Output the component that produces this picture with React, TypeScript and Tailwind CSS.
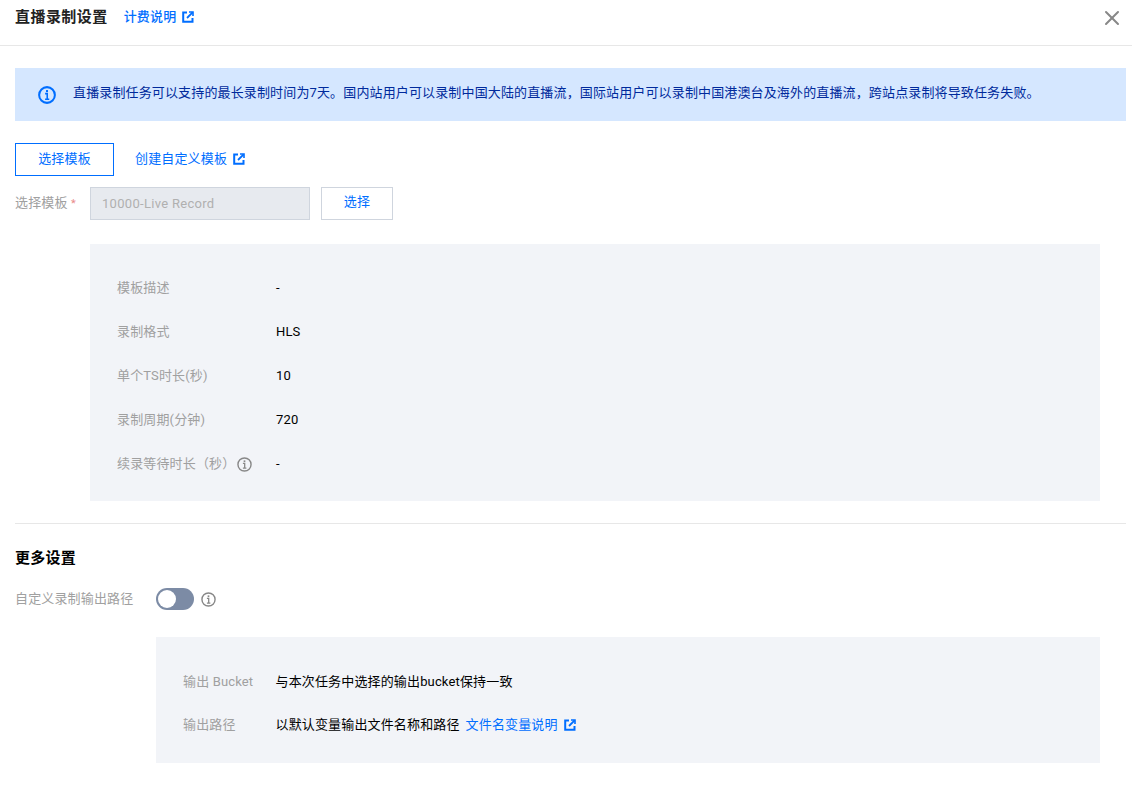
import { X } from "lucide-react";

const fontStack = "font-['Roboto','Noto_Sans_CJK_SC',sans-serif]";

const ExternalIcon = () => (
    <svg width="12" height="12" viewBox="0 0 12 12" className="shrink-0" fill="none">
        <path d="M5 1.5H1.2V10.8H10.5V7" stroke="#006eff" strokeWidth="2" />
        <path d="M7 1H11V5" stroke="#006eff" strokeWidth="1.6" />
        <path d="M10.6 1.4L5 7" stroke="#006eff" strokeWidth="1.8" />
    </svg>
);

const InfoIcon = ({ size = 15, color = "#888888", width = 1.5 }: { size?: number; color?: string; width?: number }) => (
    <svg width={size} height={size} viewBox="0 0 16 16" className="shrink-0" fill="none">
        <circle cx="8" cy="8" r="7" stroke={color} strokeWidth={width} />
        <rect x="7.1" y="3.6" width="1.8" height="1.8" fill={color} />
        <path d="M6.3 6.8H8.2V11.6M6.3 11.8H10" stroke={color} strokeWidth="1.4" />
    </svg>
);

const templateRows = [
    { label: "模板描述", value: "-" },
    { label: "录制格式", value: "HLS" },
    { label: "单个TS时长(秒)", value: "10" },
    { label: "录制周期(分钟)", value: "720" },
];

export default function App() {
    return (
        <div className={`w-[1132px] h-[795px] overflow-hidden bg-white text-[13px] tracking-[0.15px] text-black ${fontStack}`}>
            {/* Header */}
            <div className="h-[46px] pl-[15px] pr-2 pb-[12px] border-b border-[#e7e7e7] flex items-center">
                <span className="text-[15px] leading-5 font-bold tracking-[0.45px] text-[#222222]">直播录制设置</span>
                <span className="ml-[16px] text-[#006eff] font-medium">计费说明</span>
                <span className="ml-[6px]"><ExternalIcon /></span>
                <X className="ml-auto mt-[2px] text-[#888888]" size={24} strokeWidth={2} />
            </div>

            <div className="px-[15px] pt-[22px]">
                {/* Alert */}
                <div className="w-[1111px] h-[53px] bg-[#d5e7ff] pl-[23px] flex items-center gap-[17px]">
                    <InfoIcon size={18} color="#006eff" width={1.8} />
                    <span className="text-[13px] tracking-[0.14px] pb-[3px] text-[#002a9c]">
                        直播录制任务可以支持的最长录制时间为7天。国内站用户可以录制中国大陆的直播流，国际站用户可以录制中国港澳台及海外的直播流，跨站点录制将导致任务失败。
                    </span>
                </div>

                {/* Tabs */}
                <div className="mt-[22px] flex items-center">
                    <button className="w-[99px] h-[33px] pb-[2px] border border-[#006eff] text-[#006eff]">选择模板</button>
                    <span className="ml-[21px] pb-[2px] text-[#006eff]">创建自定义模板</span>
                    <span className="ml-[6px] pb-[1px]"><ExternalIcon /></span>
                </div>

                {/* Template select */}
                <div className="mt-[11px] flex items-center">
                    <span className="w-[75px] pb-[2px] text-[#a0a0a0]">
                        选择模板 <span className="text-[11px] text-[#e98a8a]">*</span>
                    </span>
                    <div className="w-[220px] h-[33px] bg-[#e7eaef] border border-[#cfd5de] pl-[11px] flex items-center tracking-[0.3px] text-[#b0b0b0]">
                        10000-Live Record
                    </div>
                    <button className="ml-[11px] w-[72px] h-[33px] pb-[3px] border border-[#cfd5de] text-[#006eff]">选择</button>
                </div>

                {/* Template details */}
                <div className="mt-[24px] ml-[75px] w-[1010px] h-[257px] bg-[#f2f4f8] pl-[27px] pt-[22px] flex flex-col">
                    {templateRows.map((row) => (
                        <div key={row.label} className="h-[44px] flex items-center">
                            <span className="w-[159px] text-[#a0a0a0]">{row.label}</span>
                            <span>{row.value}</span>
                        </div>
                    ))}
                    <div className="h-[44px] flex items-center">
                        <span className="w-[159px] flex items-center gap-[2px] text-[#a0a0a0]">
                            续录等待时长（秒）
                            <InfoIcon />
                        </span>
                        <span>-</span>
                    </div>
                </div>

                <div className="mt-[22px] w-[1111px] border-t border-[#e7e7e7]" />

                {/* More settings */}
                <div className="mt-[24px] text-[15px] leading-5 font-bold tracking-[0.25px]">更多设置</div>
                <div className="mt-[20px] flex items-center">
                    <span className="w-[141px] text-[#a0a0a0]">自定义录制输出路径</span>
                    <div className="w-[38px] h-[22px] rounded-full bg-[#7c8ba5] p-[2px]">
                        <div className="w-[18px] h-[18px] rounded-full bg-white" />
                    </div>
                    <span className="ml-[7px]"><InfoIcon /></span>
                </div>

                <div className="mt-[27px] ml-[141px] w-[944px] h-[126px] bg-[#f2f4f8] pl-[27px] pt-[22px] flex flex-col">
                    <div className="h-[44px] pt-[1px] flex items-center">
                        <span className="w-[92.5px] text-[#a0a0a0]">输出 Bucket</span>
                        <span>与本次任务中选择的输出bucket保持一致</span>
                    </div>
                    <div className="h-[44px] flex items-center">
                        <span className="w-[92.5px] text-[#a0a0a0]">输出路径</span>
                        <span>以默认变量输出文件名称和路径</span>
                        <span className="ml-[6px] text-[#006eff]">文件名变量说明</span>
                        <span className="ml-[6px]"><ExternalIcon /></span>
                    </div>
                </div>
            </div>
        </div>
    );
}
